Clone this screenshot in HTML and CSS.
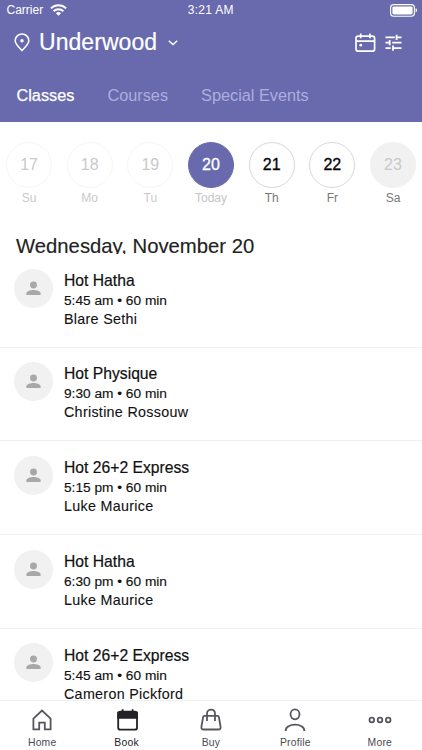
FILE: index.html
```html
<!DOCTYPE html>
<html lang="en">
<head>
<meta charset="utf-8">
<title>Book</title>
<link rel="stylesheet" href="styles.css">
</head>
<body>
<svg class="defs" width="0" height="0">
  <symbol id="person" viewBox="0 0 16 16"><circle cx="8" cy="4.3" r="3.7"/><path d="M.4 15v-1.6c0-2.6 4.8-3.7 7.6-3.7s7.6 1.1 7.6 3.7V15z"/></symbol>
</svg>
<div class="app">
  <header class="header">
    <div class="status">
      <div class="carrier"><span>Carrier</span>
        <svg width="17" height="12" viewBox="0 0 17 12" fill="none" stroke="#fff" stroke-width="2"><path d="M.9 4.4a10.8 10.8 0 0 1 15.2 0M3.6 7.2a7 7 0 0 1 9.8 0"/><path d="M5.9 9.2a3.8 3.8 0 0 1 5.2 0L8.5 11.8z" fill="#fff" stroke="none"/></svg>
      </div>
      <span class="clock">3:21 AM</span>
      <svg class="battery" width="28" height="13" viewBox="0 0 28 13"><rect x=".6" y=".6" width="23.8" height="11.6" rx="3" fill="none" stroke="#fff" stroke-width="1.1"/><rect x="2.4" y="2.4" width="20.2" height="8" rx="1.4" fill="#fff"/><path d="M25.6 4.3c2 .7 2 3.5 0 4.2z" fill="#fff"/></svg>
    </div>
    <div class="location">
      <svg width="16" height="19" viewBox="0 0 16 19" fill="none" stroke="#fff" stroke-width="1.5"><path d="M8 17.6C4.6 14 1.2 10.9 1.2 7.7a6.8 6.8 0 0 1 13.6 0c0 3.2-3.4 6.3-6.8 9.9z"/><circle cx="8" cy="7.7" r="1.7" fill="#fff" stroke="none"/></svg>
      <h1>Underwood</h1>
      <svg class="chevron" width="10" height="6" viewBox="0 0 10 6" fill="none" stroke="#fff" stroke-width="1.4"><path d="M.8.8 5 4.6 9.2.8"/></svg>
      <div class="actions">
        <svg width="21" height="20" viewBox="0 0 21 20" fill="none" stroke="#fff" stroke-width="1.7"><rect x="1" y="3.1" width="18.6" height="15.1" rx="2.3"/><path d="M1 8.2h18.6M5.7.5v4.8M14.9.5v4.8"/><circle cx="5.8" cy="12.2" r="1.4" fill="#fff" stroke="none"/></svg>
        <svg width="17" height="18" viewBox="0 0 17 18" fill="none" stroke="#fff" stroke-width="1.8"><path d="M.5 3.4h9.3M11.6 3.4h4.9M11.6.8V6M.5 8.7h4.2M7.2 8.7h9.3M4.7 6v5.3M.5 14.2h5.2M8 14.2h8.5M8 11.6v5.2"/></svg>
      </div>
    </div>
    <nav class="tabs"><span class="active">Classes</span><span>Courses</span><span>Special Events</span></nav>
  </header>
  <section class="week">
    <div class="day past"><b>17</b><span>Su</span></div>
    <div class="day past"><b>18</b><span>Mo</span></div>
    <div class="day past"><b>19</b><span>Tu</span></div>
    <div class="day today"><b>20</b><span>Today</span></div>
    <div class="day"><b>21</b><span>Th</span></div>
    <div class="day"><b>22</b><span>Fr</span></div>
    <div class="day closed"><b>23</b><span>Sa</span></div>
  </section>
  <h2 class="date">Wednesday, November 20</h2>
  <main class="list">
    <article><div class="avatar"><svg><use href="#person"/></svg></div><div class="info"><h3>Hot Hatha</h3><p class="time">5:45 am • 60 min</p><p class="teacher">Blare Sethi</p></div></article>
    <article><div class="avatar"><svg><use href="#person"/></svg></div><div class="info"><h3>Hot Physique</h3><p class="time">9:30 am • 60 min</p><p class="teacher">Christine Rossouw</p></div></article>
    <article><div class="avatar"><svg><use href="#person"/></svg></div><div class="info"><h3>Hot 26+2 Express</h3><p class="time">5:15 pm • 60 min</p><p class="teacher">Luke Maurice</p></div></article>
    <article><div class="avatar"><svg><use href="#person"/></svg></div><div class="info"><h3>Hot Hatha</h3><p class="time">6:30 pm • 60 min</p><p class="teacher">Luke Maurice</p></div></article>
    <article><div class="avatar"><svg><use href="#person"/></svg></div><div class="info"><h3>Hot 26+2 Express</h3><p class="time">5:45 am • 60 min</p><p class="teacher">Cameron Pickford</p></div></article>
  </main>
  <nav class="bottom">
    <div><svg viewBox="0 0 24 24"><path d="M3.4 10.7 12 2.5l8.6 8.2v10.7h-5.8v-6.8H9.2v6.8H3.4z"/></svg><span>Home</span></div>
    <div class="active"><svg viewBox="0 0 24 24"><rect x="3.2" y="3.7" width="18.8" height="18" rx="2.3"/><path d="M3.2 4.6H22v5.2H3.2z" fill="#222229"/><path d="M7.6 1.2v4M17.6 1.2v4"/></svg><span>Book</span></div>
    <div><svg viewBox="0 0 24 24"><path d="M5.6 7.9h12.8q1.3 0 1.5 1.3L21.6 19q.3 2.5-2.3 2.5H4.7Q2.1 21.5 2.4 19l1.7-9.8q.2-1.3 1.5-1.3zM8 12.9V5.6c0-5.4 8-5.4 8 0v7.3"/></svg><span>Buy</span></div>
    <div><svg viewBox="0 0 24 24"><ellipse cx="12" cy="6.3" rx="4.5" ry="5"/><path d="M2.6 22.9c0-8.3 18.8-8.3 18.8 0"/></svg><span>Profile</span></div>
    <div><svg viewBox="0 0 24 24"><circle cx="3.8" cy="12" r="2.3"/><circle cx="12" cy="12" r="2.3"/><circle cx="20.2" cy="12" r="2.3"/></svg><span>More</span></div>
  </nav>
</div>
</body>
</html>
```
FILE: styles.css
```css
* { box-sizing: border-box; margin: 0; padding: 0; }
body { font-family: "Liberation Sans", Arial, sans-serif; background: #fff; color: #111; overflow: hidden; }
svg { display: block; flex: none; }
.defs { position: absolute; }
.app { width: 422px; height: 750px; display: flex; flex-direction: column; overflow: hidden; }
.header { flex: none; height: 122px; background: #696aae; color: #fff; }
.status { height: 20px; display: grid; grid-template-columns: 1fr auto 1fr; align-items: center; padding: 0 4px 0 6.5px; font-size: 12px; }
.carrier { display: flex; align-items: center; gap: 7px; }
.clock { letter-spacing: .3px; margin-left: -3px; }
.battery { justify-self: end; }
.location { height: 45px; display: flex; align-items: center; padding: 0 20px 0 14px; }
.location h1 { font-size: 23px; line-height: 27px; font-weight: 400; margin: 0 11px 0 9px; letter-spacing: .05px; -webkit-text-stroke: .2px #fff; }
.actions { margin-left: auto; display: flex; align-items: center; gap: 9px; }
.tabs { display: flex; gap: 33px; padding: 20px 16px 0 16.5px; font-size: 16.3px; line-height: 20px; color: #adadde; }
.tabs .active { color: #fff; -webkit-text-stroke: .25px #fff; }
.week { flex: none; height: 110px; display: grid; grid-template-columns: repeat(7, 60.66px); margin: 0 -1.3px; padding-top: 20px; }
.day { display: flex; flex-direction: column; align-items: center; gap: 2px; font-size: 12px; line-height: 16px; color: #777; }
.day b { width: 46px; height: 46px; border: 1px solid #d8d8d8; border-radius: 50%; font-size: 16px; font-weight: 400; line-height: 43px; text-align: center; color: #050505; -webkit-text-stroke: .3px currentColor; }
.day.past { color: #c9c9c9; }
.day.past b { color: #c9c9c9; border-color: #f6f6f6; -webkit-text-stroke: 0; }
.day.today { color: #c4c4c4; }
.day.today b { color: #fff; background: #696aae; border-color: #696aae; }
.day.closed b { color: #c9c9c9; background: #f1f1f1; border-color: #f1f1f1; -webkit-text-stroke: 0; }
.date { flex: none; height: 22px; overflow: hidden; padding-left: 16px; font-size: 20.3px; line-height: 28px; font-weight: 400; color: #222; -webkit-text-stroke: .15px #222; }
.list { flex: 1; min-height: 0; overflow: hidden; }
article { height: 93.7px; display: flex; gap: 11px; padding: 14.5px 14px 0; border-bottom: 1px solid #f0f0f0; }
.avatar { flex: none; width: 39px; height: 39px; border-radius: 50%; background: #f1f1f1; display: grid; place-items: center; }
.avatar svg { width: 15px; height: 15px; fill: #a8a8a8; }
.info { padding-top: 2.3px; }
h3 { font-size: 15.7px; line-height: 20px; font-weight: 400; -webkit-text-stroke: .2px #111; }
.time { font-size: 13.7px; line-height: 20px; -webkit-text-stroke: .15px #111; }
.teacher { font-size: 14.3px; line-height: 16px; letter-spacing: .3px; -webkit-text-stroke: .1px #111; }
.bottom { flex: none; height: 50.4px; border-top: 1px solid #f0f0f0; background: #fff; display: grid; grid-template-columns: repeat(5, 1fr); }
.bottom div { display: flex; flex-direction: column; align-items: center; padding-top: 7px; font-size: 10.4px; line-height: 12px; letter-spacing: .2px; color: #4a4a52; gap: 5px; }
.bottom svg { width: 24px; height: 24px; fill: none; stroke: #56565e; stroke-width: 1.8; }
.bottom .active { color: #222229; }
.bottom .active svg { stroke: #222229; }
```
